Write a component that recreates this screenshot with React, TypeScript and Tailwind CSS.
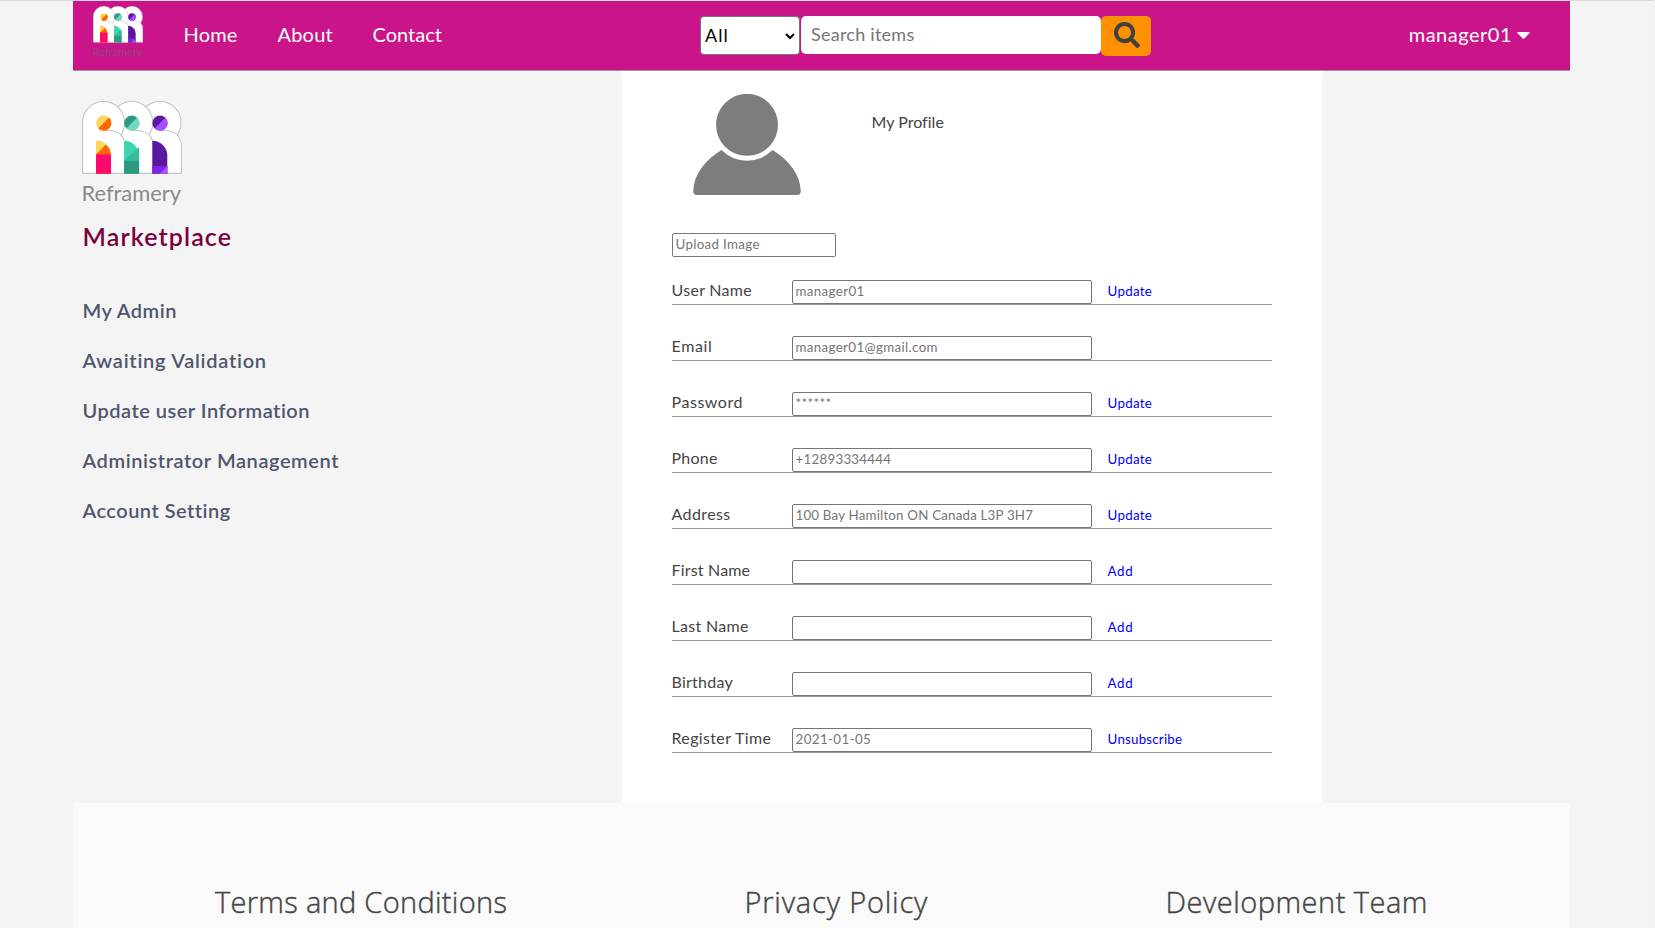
import { FaSearch } from 'react-icons/fa';

type Field = {
  label: string;
  labelCls: string;
  value: string;
  valueCls: string;
  action?: string;
  actionCls?: string;
};

const UPDATE = 'tracking-[0.28px]';
const ADD = 'tracking-[0.6px]';

const fields: Field[] = [
  { label: 'User Name', labelCls: 'tracking-[0.3px]', value: 'manager01', valueCls: 'tracking-[0.36px]', action: 'Update', actionCls: UPDATE },
  { label: 'Email', labelCls: 'tracking-[0.65px]', value: 'manager01@gmail.com', valueCls: 'tracking-[0.35px]' },
  { label: 'Password', labelCls: 'tracking-[0.55px]', value: '******', valueCls: 'tracking-[0.34px]', action: 'Update', actionCls: UPDATE },
  { label: 'Phone', labelCls: 'tracking-[0.25px]', value: '+12893334444', valueCls: 'tracking-[0.25px]', action: 'Update', actionCls: UPDATE },
  { label: 'Address', labelCls: 'tracking-[0.4px]', value: '100 Bay Hamilton ON Canada L3P 3H7', valueCls: 'tracking-[0.19px]', action: 'Update', actionCls: UPDATE },
  { label: 'First Name', labelCls: 'tracking-[0.18px]', value: '', valueCls: '', action: 'Add', actionCls: ADD },
  { label: 'Last Name', labelCls: 'tracking-[0.32px]', value: '', valueCls: '', action: 'Add', actionCls: ADD },
  { label: 'Birthday', labelCls: 'tracking-[0.25px]', value: '', valueCls: '', action: 'Add', actionCls: ADD },
  { label: 'Register Time', labelCls: 'tracking-[0.35px]', value: '2021-01-05', valueCls: 'tracking-[0.4px]', action: 'Unsubscribe', actionCls: 'tracking-[0.2px]' },
];

const menu = [
  { text: 'My Admin', cls: 'tracking-[0.5px]' },
  { text: 'Awaiting Validation', cls: 'tracking-[0.74px]' },
  { text: 'Update user Information', cls: 'tracking-[0.5px]' },
  { text: 'Administrator Management', cls: 'tracking-[0.58px]' },
  { text: 'Account Setting', cls: 'tracking-[0.48px]' },
];

function Arch({ x }: { x: number }) {
  return (
    <g transform={`translate(${x} 0)`} fill="#fff" stroke="#c4c4c4" strokeWidth="1.1">
      <path d="M0.6 72.4V21.4A21 21 0 0 1 42.6 21.4Q42.6 28 39 33.6Q43.2 39 43.2 46V72.4Z" />
      <path d="M22 29.4Q32 28.6 39 33.6" fill="none" />
    </g>
  );
}

function Logo({ className, textClass }: { className: string; textClass: string }) {
  const body = 'M14 39.7A15 15 0 0 1 29 54.5V72.8H14Z';
  return (
    <svg viewBox="0 0 100 106" className={className}>
      <Arch x={56.4} />
      <Arch x={28.2} />
      <Arch x={0} />
      <circle cx="21.7" cy="22" r="7.6" fill="#ffd65c" />
      <path d="M27.1 16.6A7.6 7.6 0 0 1 16.3 27.4Z" fill="#ff6600" />
      <circle cx="49.8" cy="22" r="7.6" fill="#2a9b80" />
      <path d="M55.2 16.6A7.6 7.6 0 0 1 44.4 27.4Z" fill="#78d6bf" />
      <circle cx="78" cy="22" r="7.6" fill="#5a189f" />
      <path d="M83.4 16.6A7.6 7.6 0 0 1 72.6 27.4Z" fill="#a550ff" />

      <path d={body} fill="#ff6600" />
      <path d="M14 39.7Q19.5 39.7 24.2 43.3L14 53.6Z" fill="#ffd65c" />
      <path d="M14 53.4H29V72.8H14Z" fill="#ff0a6c" />

      <g transform="translate(28.1 0)">
        <path d={body} fill="#3bd6b0" />
        <path d="M29 46.5V60H14Z" fill="#37bd9c" transform="translate(0 -0.3)" />
        <path d="M14 59.7H29V72.8H14Z" fill="#2a9b80" />
      </g>

      <g transform="translate(56.3 0)">
        <path d={body} fill="#5a189f" />
        <path d="M14 65H29V72.8H14Z" fill="#8123e4" />
        <path d="M29 65V72.8H21.4Z" fill="#a355ff" />
      </g>

      <text x="-0.5" y="100" textLength="99.5" lengthAdjust="spacingAndGlyphs" className={textClass}>
        Reframery
      </text>
    </svg>
  );
}

function Header() {
  return (
    <header className="flex h-[70px] items-start border-b border-[#999] bg-[#c91589] text-white">
      <Logo className="ml-5 mt-[5px] h-[53px] w-[50px] shrink-0" textClass="fill-[#93457f] text-[22px]" />
      <nav className="flex h-[66px] w-[557px] items-center pl-[40.5px] text-[20px]">
        <a className="w-[94px] tracking-[0.2px]">Home</a>
        <a className="w-[95px] tracking-[0.2px]">About</a>
        <a className="tracking-[0.02px]">Contact</a>
      </nav>
      <div className="flex pt-[15px]">
        <div className="flex h-[39px] w-[100px] items-center justify-between rounded-[4px] border border-[#767676] bg-white pl-[4px] pr-1 text-[18px] text-black">
          <span className="tracking-[1px]">All</span>
          <svg viewBox="0 0 10 7" className="mt-px h-[7px] w-[10px]">
            <path d="M1 1L5 5L9 1" fill="none" stroke="#000" strokeWidth="2" />
          </svg>
        </div>
        <div className="ml-px flex h-[38px] w-[300px] items-center rounded-[5px] bg-white pb-px pl-[10px] text-[18px] tracking-[0.25px] text-[#757575]">
          Search items
        </div>
        <div className="flex h-[40px] w-[50px] justify-center rounded-[5px] bg-[#ff9100] pl-px pt-[6px]">
          <FaSearch className="size-[26px] text-[#404040]" />
        </div>
      </div>
      <div className="ml-auto flex h-[66px] items-center pr-10 text-[20px]">
        <span className="tracking-[0.5px]">manager01</span>
        <svg viewBox="0 0 12 7" className="ml-[5px] mt-[3px] h-[7px] w-[13px]" preserveAspectRatio="none">
          <path d="M0.8 0H11.2Q12.3 0 11.6 1L7 6.3Q6 7.3 5 6.3L0.4 1Q-0.3 0 0.8 0Z" fill="#fff" />
        </svg>
      </div>
    </header>
  );
}

function Sidebar() {
  return (
    <aside className="w-[549px] pl-[9px] pt-[30px]">
      <Logo className="h-[106px] w-[100px]" textClass="fill-[#8a8a8a] text-[22px]" />
      <h1 className="mt-[14px] pl-[0.5px] text-[25px] font-semibold leading-[31px] tracking-[1.12px] text-[#7b0040]">
        Marketplace
      </h1>
      <ul className="mt-[33px] pl-[0.5px] text-[20px] font-semibold leading-[50px] text-[#50566f]">
        {menu.map((m) => (
          <li key={m.text} className={m.cls}>
            {m.text}
          </li>
        ))}
      </ul>
    </aside>
  );
}

const box = 'h-6 rounded-[2px] border border-[#767676] bg-white pl-[2.5px] text-[13.33px] leading-[20px] text-[#757575]';

function Profile() {
  return (
    <main className="h-[732px] w-[700px] bg-white px-[50px] pt-[23px]">
      <div className="flex h-[139px] pl-[21px]">
        <svg viewBox="0 0 108 102" className="h-[102px] w-[108px]" fill="#7d7d7d">
          <circle cx="54" cy="30.8" r="31" />
          <path d="M28.5 56A35.8 35.8 0 0 0 79.5 56C96 66 107 80 107.8 97Q107.8 101 104 101H4Q0.2 101 0.2 97C1 80 12 66 28.5 56Z" />
        </svg>
        <span className="ml-[70.5px] mt-[18px] text-[16px] leading-[20px] tracking-[0.02px]">My Profile</span>
      </div>
      <div className={`${box} w-[164px] tracking-[0.33px]`}>Upload Image</div>
      <div className="mt-[23px] flex flex-col gap-[31px]">
        {fields.map((f) => (
          <div key={f.label} className="flex h-[25px] border-b border-[#999]">
            <span className={`-ml-[0.5px] w-[120.5px] text-[16px] leading-[20px] ${f.labelCls}`}>{f.label}</span>
            <div className={`${box} w-[300px] ${f.valueCls}`}>{f.value}</div>
            {f.action && (
              <a className={`ml-[15.6px] text-[13.33px] leading-[23px] text-[#0000ff] ${f.actionCls}`}>{f.action}</a>
            )}
          </div>
        ))}
      </div>
    </main>
  );
}

export default function App() {
  return (
    <div className="h-[928px] overflow-hidden border-r-2 border-t border-r-[#f1f1f1] border-t-[#d9d9de] bg-[#f4f4f4] pl-[73px] font-['Lato','Noto_Sans',sans-serif] text-[#444]">
      <div className="w-[1497px]">
        <Header />
        <div className="flex">
          <Sidebar />
          <Profile />
        </div>
        <footer className="flex h-[125px] justify-between bg-[#fafafa] pl-[142px] pr-[142px] pt-[80px] font-['Open_Sans',sans-serif] text-[29px] font-light leading-[38px] [-webkit-text-stroke:0.4px_#444]">
          <span className="tracking-[0.3px]">Terms and Conditions</span>
          <span className="tracking-[0.82px]">Privacy Policy</span>
          <span className="tracking-[0.5px]">Development Team</span>
        </footer>
      </div>
    </div>
  );
}
